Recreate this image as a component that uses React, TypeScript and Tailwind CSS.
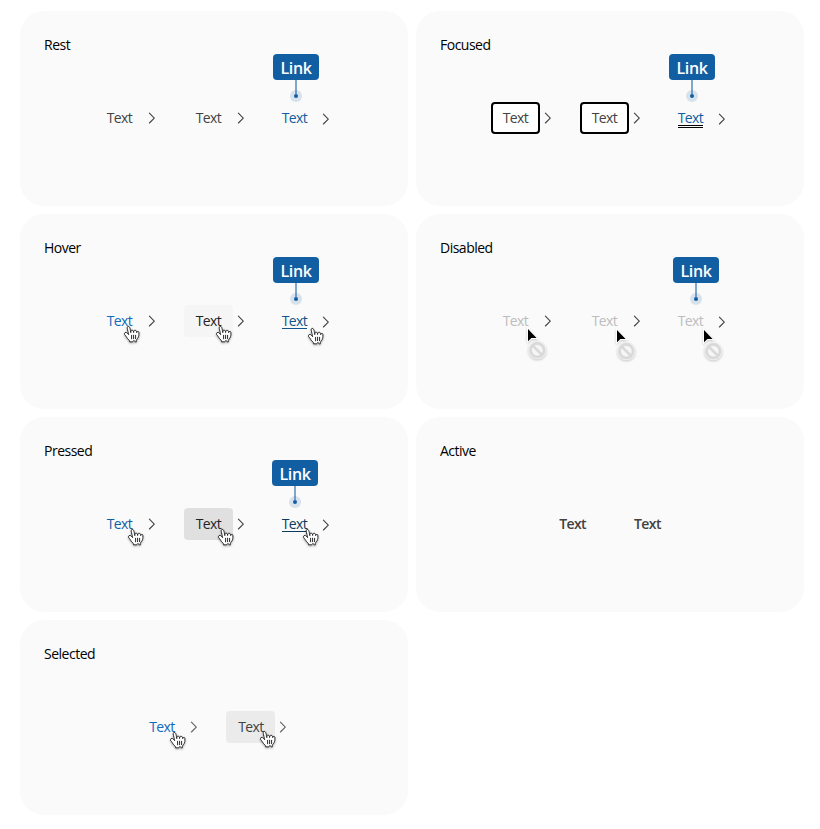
import React from 'react';
import clsx from 'clsx';

const HAND =
  'M11.3 20.4c-.3-.4-.6-1.1-1.2-2-.3-.5-1.2-1.5-1.5-1.9-.2-.4-.2-.6-.1-1 .1-.6.7-1.1 1.4-1.1.5 0 1 .4 1.4.7.2.2.5.6.7.8.2.2.2.3.4.5.2.3.3.5.2.1-.1-.5-.2-1.3-.4-2.1-.1-.6-.2-.7-.3-1.1-.1-.5-.2-.8-.3-1.3-.1-.3-.2-1.1-.3-1.5-.1-.5-.1-1.4.3-1.8.3-.3.9-.4 1.3-.2.5.3.8 1 .9 1.3.2.5.4 1.2.5 2 .2 1 .5 2.5.5 2.8 0-.4-.1-1.1 0-1.5.1-.3.3-.7.7-.8.3-.1.6-.1.9-.1.3.1.6.3.8.5.4.6.4 1.9.4 1.8.1-.4.1-1.2.3-1.6.1-.2.5-.4.7-.5.3-.1.7-.1 1 0 .2 0 .6.3.7.5.2.3.3 1.3.4 1.7 0 .1.1-.4.3-.7.4-.6 1.8-.8 1.9.6v1.9c0 .5 0 .7-.1 1.2-.1.4-.3 1.3-.5 1.7-.2.3-.5.8-.8 1.3 0 0-1 1.1-1.1 1.6-.1.5-.1.5-.1.8 0 .3.1.8.1.8s-.7.1-1.1 0c-.4-.1-.9-.8-1-1.1-.2-.3-.5-.3-.7 0-.2.4-.7 1.1-1 1.1-.7.1-2.1 0-3.1 0 0 0 .2-1-.2-1.4-.3-.3-.8-.8-1.1-1.1l-.8-.9z';

function Hand({ at }: { at: string }) {
  return (
    <svg viewBox="0 0 32 32" className={clsx('absolute z-10 size-8 max-w-none drop-shadow-[0_1px_1px_rgba(0,0,0,0.35)]', at)}>
      <path d={HAND} fill="#fff" stroke="#111" strokeWidth="0.9" strokeLinejoin="round" />
      <path d="M15.6 17.3v3.5M17.6 17.2v3.5M19.6 17.3v3.4" fill="none" stroke="#111" strokeWidth="0.9" strokeLinecap="round" />
    </svg>
  );
}

function NotAllowed({ at }: { at: string }) {
  return (
    <svg viewBox="0 0 26 36" className={clsx('absolute z-10 h-9 w-[26px] max-w-none drop-shadow-[0_1px_1px_rgba(0,0,0,0.2)]', at)}>
      <path d="M3 2v12.2l3.4-3.1h5.2z" fill="#000" stroke="#fff" strokeWidth="1.8" paintOrder="stroke" />
      <circle cx="12.3" cy="23.2" r="7" fill="#f6f6f6" stroke="#efefef" strokeWidth="4.2" />
      <circle cx="12.3" cy="23.2" r="6.8" fill="none" stroke="#d9d9d9" strokeWidth="2.6" />
      <path d="M7.5 18.4l9.6 9.6" stroke="#d9d9d9" strokeWidth="2.6" />
    </svg>
  );
}

function Chevron({ color = '#424242' }: { color?: string }) {
  return (
    <svg viewBox="0 0 16 16" className="size-4 shrink-0" fill="none" stroke={color} strokeWidth="1.1" strokeLinecap="round" strokeLinejoin="round">
      <path d="M5.4 3.2l4.9 4.9-4.9 4.9" />
    </svg>
  );
}

function Item({ tone, chevron = '#424242', children }: { tone: string; chevron?: string; children?: React.ReactNode }) {
  return (
    <div className="relative flex items-center">
      <div className={clsx('flex h-8 w-[49px] items-center justify-center rounded-[4px] pl-px', tone)}>
        <span className="-translate-y-px">Text</span>
      </div>
      <Chevron color={chevron} />
      {children}
    </div>
  );
}

function Link({ tone, label = 'left-[-8.5px]', children }: { tone: string; label?: string; children?: React.ReactNode }) {
  return (
    <div className="relative ml-[9px] flex h-8 items-center">
      <div className={clsx('absolute top-[-48px] flex w-[46px] flex-col items-center', label)}>
        <div className="flex h-[26px] w-full items-center justify-center rounded-[4px] bg-[#115ea3] text-[16px] font-semibold tracking-[-0.4px] text-white">
          <span className="translate-y-px">Link</span>
        </div>
        <div className="h-[14px] w-[2px] bg-[#7fa6cb]" />
        <div className="-mt-1 flex size-3 items-center justify-center rounded-full bg-[#115ea3]/15">
          <div className="size-1 rounded-full bg-[#115ea3]" />
        </div>
      </div>
      <div className={clsx('mr-[10px] flex h-[18px] w-[26px] items-center justify-center', tone)}>
        <span className="-translate-y-px">Text</span>
      </div>
      <div className="mt-0.5 flex">
        <Chevron />
      </div>
      {children}
    </div>
  );
}

function Card({ title, children }: { title: string; children: React.ReactNode }) {
  return (
    <section className="h-[195px] rounded-[24px] bg-[#fafafa] px-6 pt-6">
      <h2 className="h-5 leading-5 tracking-[-0.5px] text-black">{title}</h2>
      <div className="mt-[47px] flex justify-center gap-6">{children}</div>
    </section>
  );
}

export default function App() {
  return (
    <main className="h-[829px] w-[820px] overflow-hidden bg-white px-5 pt-[11px] font-['Open_Sans','Noto_Sans',sans-serif] text-[14px] tracking-[-0.6px]">
      <div className="grid w-[784px] grid-cols-2 gap-2">
        <Card title="Rest">
          <Item tone="text-[#424242]" />
          <Item tone="text-[#424242]" />
          <Link tone="text-[#115ea3]" />
        </Card>

        <Card title="Focused">
          <Item tone="border-2 border-black bg-white text-[#424242]" />
          <Item tone="border-2 border-black bg-white text-[#424242]" />
          <Link tone="text-[#115ea3]">
            <div className="absolute top-[23px] left-0 h-[3px] w-[25px] border-y border-black" />
          </Link>
        </Card>

        <Card title="Hover">
          <Item tone="text-[#0f6cbd]">
            <Hand at="left-[21.5px] top-[13px]" />
          </Item>
          <Item tone="bg-[#f5f5f5] text-[#242424]">
            <Hand at="left-[24.5px] top-[13px]" />
          </Item>
          <Link tone="text-[#0f548c]">
            <div className="absolute top-[23px] left-0 h-px w-[25px] bg-[#0f548c]" />
            <Hand at="left-[18.5px] top-[15px]" />
          </Link>
        </Card>

        <Card title="Disabled">
          <Item tone="text-[#bdbdbd]">
            <NotAllowed at="left-[34.5px] top-[22px]" />
          </Item>
          <Item tone="text-[#bdbdbd]">
            <NotAllowed at="left-[34.5px] top-[23px]" />
          </Item>
          <Link tone="text-[#bdbdbd]" label="left-[-4.5px]">
            <NotAllowed at="left-[23.5px] top-[23px]" />
          </Link>
        </Card>

        <Card title="Pressed">
          <Item tone="text-[#115ea3]">
            <Hand at="left-[25.5px] top-[13px]" />
          </Item>
          <Item tone="bg-[#e0e0e0] text-[#242424]">
            <Hand at="left-[26.5px] top-[13px]" />
          </Item>
          <Link tone="text-[#0c3b5e]" label="left-[-9.5px]">
            <div className="absolute top-[23px] left-0 h-px w-[25px] bg-[#0c3b5e]" />
            <Hand at="left-[13.5px] top-[13px]" />
          </Link>
        </Card>

        <Card title="Active">
          <div className="flex h-8 -translate-y-px items-center gap-12 font-semibold text-[#424242]">
            <span>Text</span>
            <span>Text</span>
          </div>
        </Card>

        <Card title="Selected">
          <Item tone="text-[#0f6cbd]" chevron="#616161">
            <Hand at="left-[25px] top-[13px]" />
          </Item>
          <Item tone="bg-[#ebebeb] text-[#424242]" chevron="#616161">
            <Hand at="left-[26px] top-[12px]" />
          </Item>
        </Card>
      </div>
    </main>
  );
}
